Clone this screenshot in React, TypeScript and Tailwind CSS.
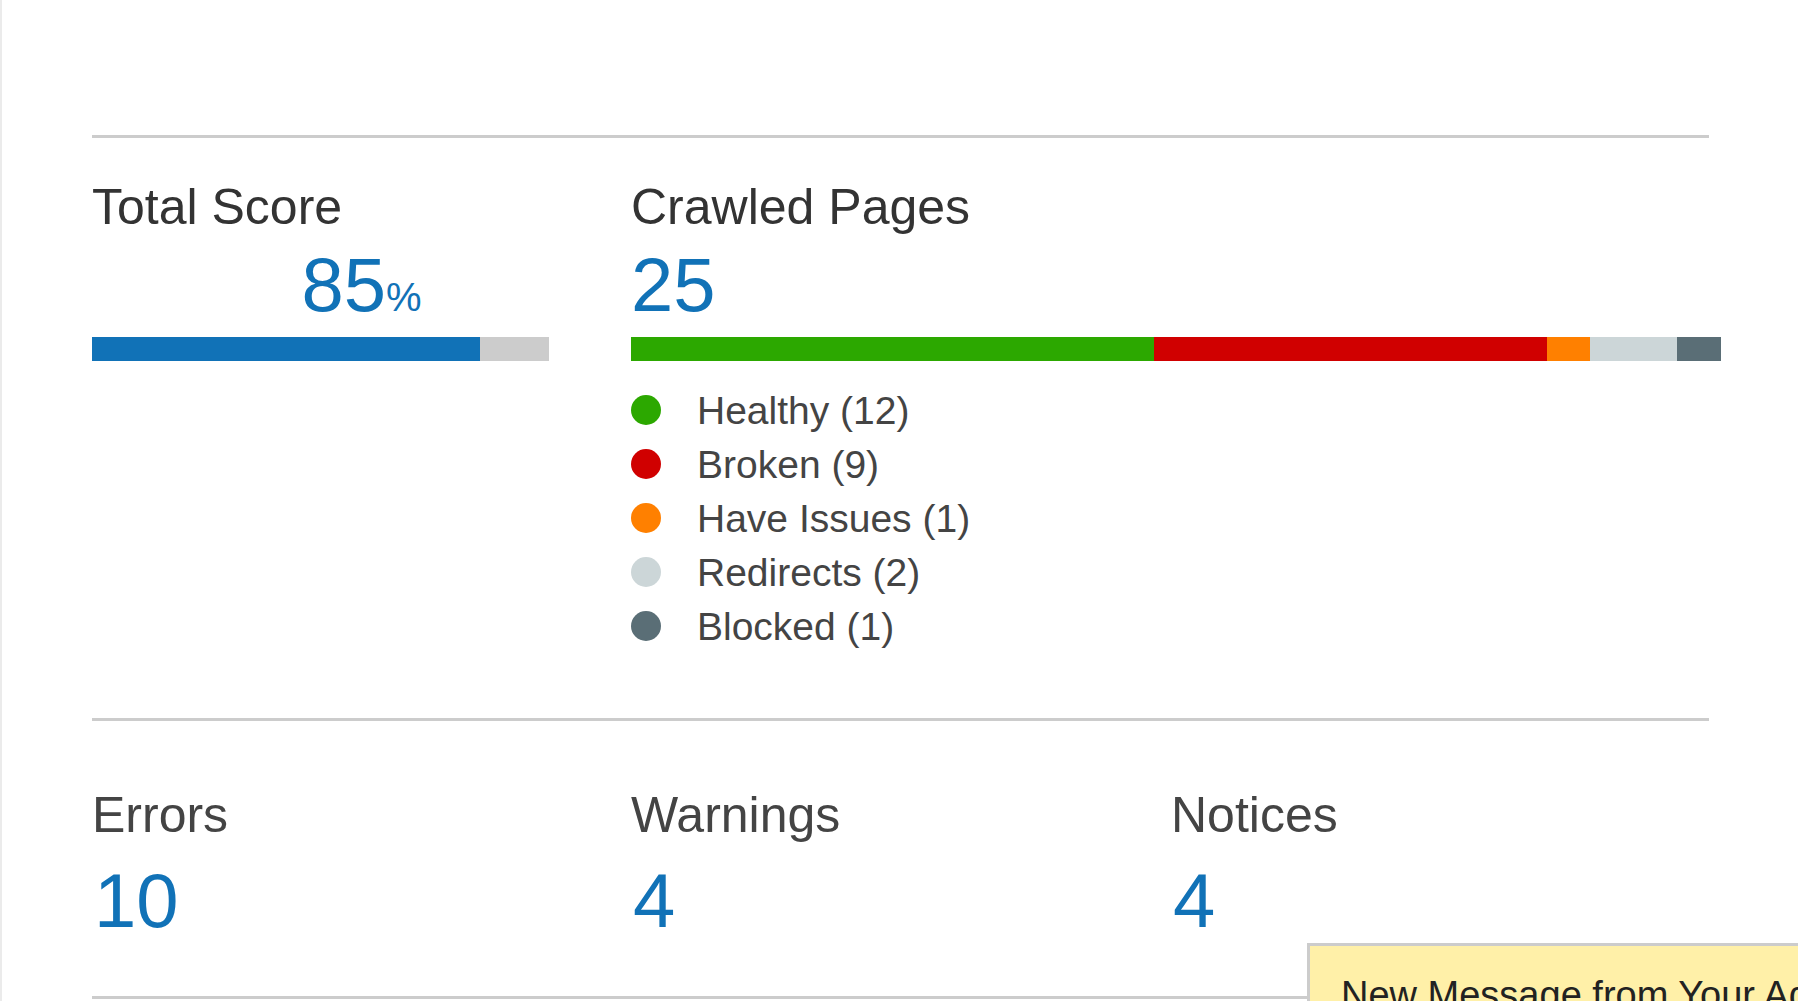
import React from "react";

type Segmento = {
  nome: string;
  total: number;
  cor: string;
};

const segmentos: Segmento[] = [
  { nome: "Healthy", total: 12, cor: "bg-[#2ca800]" },
  { nome: "Broken", total: 9, cor: "bg-[#d00000]" },
  { nome: "Have Issues", total: 1, cor: "bg-[#ff8000]" },
  { nome: "Redirects", total: 2, cor: "bg-[#ccd6d8]" },
  { nome: "Blocked", total: 1, cor: "bg-[#5a6e76]" },
];

const contadores = [
  { nome: "Errors", valor: 10 },
  { nome: "Warnings", valor: 4 },
  { nome: "Notices", valor: 4 },
];

function Regua() {
  return <div className="h-[3px] w-[1617px] bg-[#cccccc]" />;
}

export default function App() {
  const totalPaginas = segmentos.reduce((s, x) => s + x.total, 0);

  return (
    <main className="relative min-h-screen overflow-hidden border-l-2 border-[#ebebeb] bg-white font-['Liberation_Sans',Arial,sans-serif]">
      <div className="pl-[90px] pt-[135px]">
        <Regua />

        <div className="grid grid-cols-[539px_1078px] pt-[44px]">
          <div>
            <h2 className="text-[50px] leading-none text-[#333333]">
              Total Score
            </h2>
            <div className="mt-[15px] text-center text-[76px] leading-none text-[#1172b7]">
              85<span className="text-[40px]">%</span>
            </div>
            <div className="mt-[14px] flex h-[24px] w-[457px] bg-[#cccccc]">
              <div className="h-full w-[85%] bg-[#1172b7]" />
            </div>
          </div>

          <div>
            <h2 className="text-[50px] leading-none text-[#333333]">
              Crawled Pages
            </h2>
            <div className="mt-[15px] text-[76px] leading-none text-[#1172b7]">
              {totalPaginas}
            </div>
            <div className="mt-[14px] flex h-[24px] w-[1090px]">
              {segmentos.map((s) => (
                <div
                  key={s.nome}
                  className={`h-full ${s.cor}`}
                  style={{ width: `${(s.total / totalPaginas) * 100}%` }}
                />
              ))}
            </div>

            <ul className="mt-[23px]">
              {segmentos.map((s) => (
                <li key={s.nome} className="flex h-[54px]">
                  <span
                    className={`mt-[11px] h-[30px] w-[30px] shrink-0 rounded-full ${s.cor}`}
                  />
                  <span className="ml-[36px] text-[39px] leading-[54px] text-[#444444]">
                    {s.nome} ({s.total})
                  </span>
                </li>
              ))}
            </ul>
          </div>
        </div>

        <div className="pt-[64px]">
          <Regua />
        </div>

        <div className="grid grid-cols-[539px_540px_538px] pt-[69px]">
          {contadores.map((c) => (
            <div key={c.nome}>
              <h3 className="text-[50px] leading-none text-[#444444]">
                {c.nome}
              </h3>
              <div className="mt-[23px] pl-[2px] text-[76px] leading-none text-[#1172b7]">
                {c.valor}
              </div>
            </div>
          ))}
        </div>

        <div className="pt-[57px]">
          <Regua />
        </div>
      </div>

      <div className="absolute left-[1305px] top-[943px] h-[200px] w-[600px] border-[3px] border-[#cccccc] bg-[#fff0a8] px-[31px] pt-[30px]">
        <p className="whitespace-nowrap text-[38px] leading-none text-[#222222]">
          New Message from Your Admin
        </p>
      </div>
    </main>
  );
}
